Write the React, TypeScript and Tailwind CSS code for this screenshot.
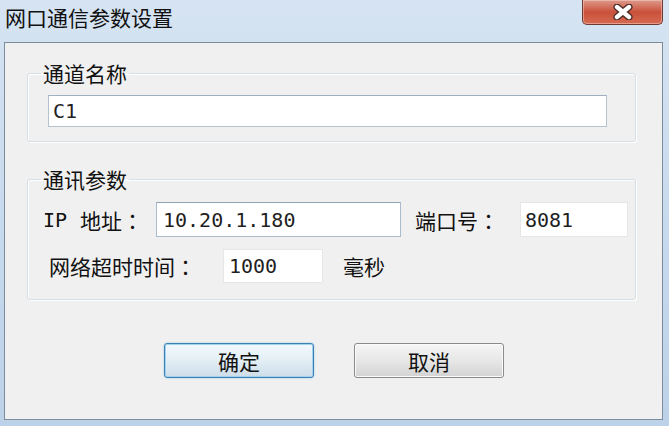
import React from 'react';

const cjk = { fontFamily: '"Noto Sans CJK SC", "Noto Sans", sans-serif' };
const mono = { fontFamily: '"DejaVu Sans Mono", "Liberation Mono", monospace' };
const tc = { fontFamily: '"Noto Sans CJK TC", sans-serif' };

function Colon() {
  return <span style={tc}>：</span>;
}

function Field({ value, className }: { value: string; className: string }) {
  return (
    <div
      className={`flex items-center bg-white text-[20px] leading-none text-[#1f1f1f] ${className}`}
      style={mono}
    >
      {value}
    </div>
  );
}

function CloseButton() {
  return (
    <div className="ml-auto mr-[6px] flex h-[25px] w-[81px] items-center justify-center rounded-b-[5px] border border-t-0 border-[#6e3b33] bg-gradient-to-b from-[#dc9a8c] via-[#c9503a] to-[#d66a50] shadow-[inset_0_0_0_1px_rgba(255,220,210,0.45)]">
      <svg width="20" height="16" viewBox="0 0 20 16">
        <path
          d="M4 3 L16 13 M16 3 L4 13"
          stroke="#4a2a26"
          strokeWidth="7"
          strokeLinecap="round"
        />
        <path
          d="M4 3 L16 13 M16 3 L4 13"
          stroke="#ffffff"
          strokeWidth="4.4"
          strokeLinecap="round"
        />
      </svg>
    </div>
  );
}

export default function App() {
  return (
    <div
      className="flex h-[426px] w-[669px] flex-col bg-gradient-to-b from-[#d6e4f2] via-[#c8daee] to-[#bcd2e8]"
      style={cjk}
    >
      {/* title bar */}
      <div className="flex h-[42px] items-start">
        <div className="pl-[5px] pt-[6px] text-[21px] leading-[22px] text-[#111]">网口通信参数设置</div>
        <CloseButton />
      </div>

      {/* client area */}
      <div className="ml-[4px] mr-[6px] flex h-[378px] flex-col border border-[#7c8c9d] bg-[#f0f0f0] text-[21px] leading-[22px] text-[#111]">
        <fieldset className="ml-[22px] mr-[26px] mt-[19px] rounded-[3px] border border-[#d5dfe5] p-0 shadow-[inset_1px_1px_0_#fff,1px_1px_0_#fff]">
          <legend className="ml-[13px] px-[2px]">通道名称</legend>
          <div className="pb-[14px] pl-[20px] pr-[28px] pt-[11px]">
            <Field
              value="C1"
              className="h-[32px] border border-[#b4c2cf] border-t-[#9fb0c1] pl-[4px]"
            />
          </div>
        </fieldset>

        <fieldset className="ml-[22px] mr-[26px] mt-[26px] rounded-[3px] border border-[#d5dfe5] p-0 shadow-[inset_1px_1px_0_#fff,1px_1px_0_#fff]">
          <legend className="ml-[13px] px-[2px]">通讯参数</legend>
          <div className="flex flex-col gap-[12px] pb-[16px] pt-[12px]">
            <div className="flex items-center pl-[15px]">
              <div className="flex w-[113px] items-center">
                <span className="text-[20px]" style={mono}>IP</span>
                <span className="ml-[13px]">地址<Colon /></span>
              </div>
              <Field
                value="10.20.1.180"
                className="h-[35px] w-[245px] border border-[#a9bbcd] border-t-[#8ea2b6] pl-[6px]"
              />
              <div className="ml-[14px] w-[105px]">端口号<Colon /></div>
              <Field value="8081" className="h-[35px] w-[108px] border border-[#e6e6e6] pl-[4px]" />
            </div>
            <div className="flex items-center pl-[21px]">
              <div className="w-[174px]">网络超时时间<Colon /></div>
              <Field value="1000" className="h-[34px] w-[100px] border border-[#e6e6e6] pl-[5px]" />
              <div className="ml-[20px]">毫秒</div>
            </div>
          </div>
        </fieldset>

        <div className="mt-[43px] flex justify-center gap-[40px] pl-[1px]">
          <button className="flex h-[35px] w-[150px] items-center justify-center rounded-[3px] border border-[#3d7fb0] bg-gradient-to-b from-[#f3f9fd] via-[#e3eef5] to-[#cddde8] text-[21px] leading-[22px] text-[#111] shadow-[inset_0_0_0_1px_#9fd3f0,0_0_2px_#8cc8ec]">
            确定
          </button>
          <button className="flex h-[35px] w-[150px] items-center justify-center rounded-[3px] border border-[#8a8a8a] bg-gradient-to-b from-[#f5f5f5] via-[#e7e7e7] to-[#d3d3d3] text-[21px] leading-[22px] text-[#111] shadow-[inset_0_0_0_1px_#fbfbfb]">
            取消
          </button>
        </div>
      </div>
    </div>
  );
}
